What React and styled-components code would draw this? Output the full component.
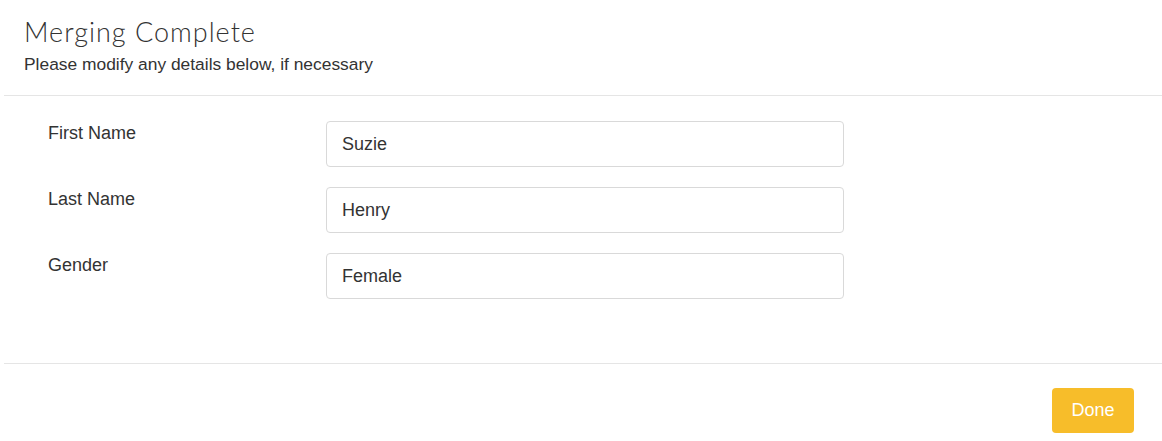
import styled, { createGlobalStyle } from 'styled-components'

const GlobalStyle = createGlobalStyle`
    body {
        margin: 0;
        background: #fff;
        font-family: "Liberation Sans", Arial, sans-serif;
        color: #333;
    }
`

const Page = styled.div`
    padding-left: 4px;
    width: 1158px;
`

const Header = styled.div`
    padding: 16px 0 19px 20px;
    border-bottom: 1px solid #e5e5e5;
`

const Title = styled.h1`
    margin: 0;
    font-family: Lato, "Open Sans", sans-serif;
    font-weight: 300;
    font-size: 27px;
    line-height: 32px;
    color: #333;
    letter-spacing: 1px;
`

const Subtitle = styled.p`
    margin: 4px 0 0;
    font-size: 17.4px;
    line-height: 24px;
    color: #333;
`

const Form = styled.form`
    display: grid;
    grid-template-columns: 278px 518px;
    row-gap: 20px;
    padding: 25px 0 64px 44px;
    border-bottom: 1px solid #e5e5e5;
`

const Label = styled.label`
    font-size: 18px;
    line-height: 24px;
    color: #333;
`

const Input = styled.input`
    box-sizing: border-box;
    height: 46px;
    width: 518px;
    padding: 0 15px;
    border: 1px solid #d9d9d9;
    border-radius: 4px;
    font-family: "Liberation Sans", Arial, sans-serif;
    font-size: 18px;
    color: #333;
    outline: none;
    background: #fff;
`

const Footer = styled.div`
    display: flex;
    justify-content: flex-end;
    padding: 24px 28px 8px 0;
`

const DoneButton = styled.button`
    width: 82px;
    height: 45px;
    background: #f7bd2a;
    border: none;
    border-radius: 4px;
    color: #fff;
    font-family: "Liberation Sans", Arial, sans-serif;
    font-size: 18px;
    cursor: pointer;
`

const fields = [
    { id: 'firstName', label: 'First Name', value: 'Suzie' },
    { id: 'lastName', label: 'Last Name', value: 'Henry' },
    { id: 'gender', label: 'Gender', value: 'Female' },
]

const App = () => {
    return (
        <Page>
            <GlobalStyle />
            <Header>
                <Title>Merging Complete</Title>
                <Subtitle>Please modify any details below, if necessary</Subtitle>
            </Header>
            <Form onSubmit={(e) => e.preventDefault()}>
                {fields.map(f => [
                    <Label key={f.id + '-label'} htmlFor={f.id}>{f.label}</Label>,
                    <Input key={f.id} id={f.id} defaultValue={f.value} />,
                ])}
            </Form>
            <Footer>
                <DoneButton type="button">Done</DoneButton>
            </Footer>
        </Page>
    )
}

export default App
